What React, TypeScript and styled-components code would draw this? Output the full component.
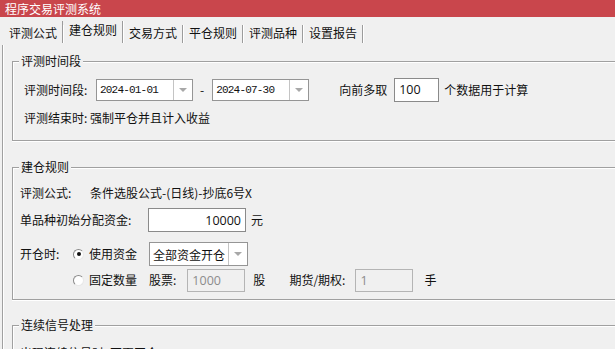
import React from 'react';
import styled, { createGlobalStyle } from 'styled-components';

const Global = createGlobalStyle`
  html, body { margin: 0; padding: 0; background: #f0f0f0; }
  body {
    font-family: "Noto Sans CJK SC", "Microsoft YaHei", sans-serif;
    font-size: 12px;
    color: #111;
  }
  * { box-sizing: border-box; }
`;

const Window = styled.div`
  width: 615px;
  height: 349px;
  overflow: hidden;
  background: #f0f0f0;
  display: flex;
  flex-direction: column;
`;

const TitleBar = styled.div`
  flex: none;
  height: 17px;
  background: #c9464c;
  color: #fff;
  padding-left: 5px;
  font-size: 12px;
  line-height: 17px;
`;

const TabStrip = styled.div`
  flex: none;
  height: 28px;
  display: flex;
  align-items: flex-end;
  padding: 0 0 2px 3px;
`;

const Tab = styled.div<{ $active?: boolean }>`
  height: ${(p) => (p.$active ? 22 : 18)}px;
  line-height: ${(p) => (p.$active ? 18 : 16)}px;
  padding: 0 5px 0 6px;
  border-right: 1px solid #9c9c9c;
  box-shadow: 1px 0 0 #fff;
  margin-left: ${(p) => (p.$active ? -1 : 0)}px;
  border-left: ${(p) => (p.$active ? '1px solid #9c9c9c' : 'none')};
  white-space: nowrap;
  font-size: 12px;
`;

const Panel = styled.div`
  flex: 1;
  margin-left: 2px;
  border-left: 1px solid #a0a0a0;
  box-shadow: inset 1px 0 0 #fff;
  padding: 9px 0 0 9px;
`;

const Group = styled.section<{ $top?: number }>`
  margin-top: ${(p) => p.$top ?? 0}px;
  margin-right: -10px;
`;

const GroupHead = styled.div`
  display: flex;
  align-items: stretch;
  height: 14px;
  line-height: 14px;

  &::before {
    content: "";
    flex: none;
    width: 6px;
    margin-top: 7px;
    border-top: 1px solid #a0a0a0;
    border-left: 1px solid #a0a0a0;
    box-shadow: inset 1px 1px 0 #fff;
  }
  &::after {
    content: "";
    flex: 1;
    margin-top: 7px;
    border-top: 1px solid #a0a0a0;
    box-shadow: inset 0 1px 0 #fff;
  }
`;

const GroupTitle = styled.span`
  padding: 0 2px;
  white-space: nowrap;
`;

const GroupBody = styled.div<{ $pl: number; $pt: number; $pb: number; $gap: number }>`
  border-left: 1px solid #a0a0a0;
  border-bottom: 1px solid #a0a0a0;
  box-shadow: inset 1px 0 0 #fff, 0 1px 0 #fff;
  padding: ${(p) => `${p.$pt}px 0 ${p.$pb}px ${p.$pl}px`};
  display: flex;
  flex-direction: column;
  gap: ${(p) => p.$gap}px;
`;

const Row = styled.div<{ $h: number; $gap?: number }>`
  display: flex;
  align-items: center;
  height: ${(p) => p.$h}px;
  margin-top: ${(p) => p.$gap ?? 0}px;
  white-space: nowrap;
`;

const Label = styled.span<{ $w?: number; $ml?: number; $dim?: boolean }>`
  flex: none;
  width: ${(p) => (p.$w ? `${p.$w}px` : 'auto')};
  margin-left: ${(p) => p.$ml ?? 0}px;
  line-height: 16px;
  color: ${(p) => (p.$dim ? '#111' : '#111')};
`;

const Spacer = styled.span<{ $w: number }>`
  flex: none;
  width: ${(p) => p.$w}px;
`;

const Combo = styled.div<{ $w: number; $h: number; $ml?: number }>`
  flex: none;
  display: flex;
  width: ${(p) => p.$w}px;
  height: ${(p) => p.$h}px;
  margin-left: ${(p) => p.$ml ?? 0}px;
  background: #fff;
  border: 1px solid #959595;
`;

const ComboText = styled.span<{ $mono?: boolean }>`
  flex: 1;
  padding-left: 3px;
  display: flex;
  align-items: center;
  font-family: ${(p) =>
    p.$mono ? '"Liberation Mono", "DejaVu Sans Mono", monospace' : 'inherit'};
  font-size: ${(p) => (p.$mono ? 11 : 12)}px;
  letter-spacing: ${(p) => (p.$mono ? -0.8 : 0)}px;
  overflow: hidden;
`;

const ComboButton = styled.span`
  flex: none;
  width: 19px;
  border-left: 1px solid #c4c4c4;
  display: flex;
  align-items: center;
  justify-content: center;
`;

const Arrow = styled.span`
  width: 0;
  height: 0;
  border-left: 4px solid transparent;
  border-right: 4px solid transparent;
  border-top: 4px solid #a8a8a8;
`;

const Input = styled.div<{ $w: number; $h: number; $ml?: number; $right?: boolean; $disabled?: boolean }>`
  flex: none;
  width: ${(p) => p.$w}px;
  height: ${(p) => p.$h}px;
  margin-left: ${(p) => p.$ml ?? 0}px;
  border: 1px solid ${(p) => (p.$disabled ? '#b4b4b4' : '#8a8a8a')};
  background: ${(p) => (p.$disabled ? '#f0f0f0' : '#fff')};
  color: ${(p) => (p.$disabled ? '#8c8c8c' : '#111')};
  display: flex;
  align-items: center;
  justify-content: ${(p) => (p.$right ? 'flex-end' : 'flex-start')};
  padding: 0 4px;
  font-family: "Open Sans", "Noto Sans", sans-serif;
  font-size: 12.5px;
`;

const Radio = styled.span<{ $checked?: boolean; $ml?: number }>`
  flex: none;
  width: 11px;
  height: 11px;
  margin-left: ${(p) => p.$ml ?? 0}px;
  margin-right: 5px;
  border-radius: 50%;
  border: 1px solid;
  border-color: #8a8a8a #e8e8e8 #e8e8e8 #8a8a8a;
  background: #fff;
  display: flex;
  align-items: center;
  justify-content: center;

  &::after {
    content: "";
    width: 4px;
    height: 4px;
    border-radius: 50%;
    background: ${(p) => (p.$checked ? '#111' : 'transparent')};
  }
`;

const tabs = ['评测公式', '建仓规则', '交易方式', '平仓规则', '评测品种', '设置报告'];

export default function App() {
  return (
    <>
      <Global />
      <Window>
        <TitleBar>程序交易评测系统</TitleBar>
        <TabStrip>
          {tabs.map((t, i) => (
            <Tab key={t} $active={i === 1}>
              {t}
            </Tab>
          ))}
        </TabStrip>
        <Panel>
          <Group>
            <GroupHead>
              <GroupTitle>评测时间段</GroupTitle>
            </GroupHead>
            <GroupBody $pl={11} $pt={10} $pb={12} $gap={7}>
              <Row $h={23}>
                <Label $w={72}>评测时间段:</Label>
                <Combo $w={97} $h={22}>
                  <ComboText $mono>2024-01-01</ComboText>
                  <ComboButton>
                    <Arrow />
                  </ComboButton>
                </Combo>
                <Label $ml={7}>-</Label>
                <Combo $w={97} $h={22} $ml={8}>
                  <ComboText $mono>2024-07-30</ComboText>
                  <ComboButton>
                    <Arrow />
                  </ComboButton>
                </Combo>
                <Label $ml={30}>向前多取</Label>
                <Input $w={45} $h={24} $ml={7}>100</Input>
                <Label $ml={5}>个数据用于计算</Label>
              </Row>
              <Row $h={20}>
                <Label>评测结束时: 强制平仓并且计入收益</Label>
              </Row>
            </GroupBody>
          </Group>

          <Group $top={19}>
            <GroupHead>
              <GroupTitle>建仓规则</GroupTitle>
            </GroupHead>
            <GroupBody $pl={7} $pt={9} $pb={7} $gap={0}>
              <Row $h={20}>
                <Label $w={70}>评测公式:</Label>
                <Label>条件选股公式-(日线)-抄底6号X</Label>
              </Row>
              <Row $h={24} $gap={5}>
                <Label $w={128}>单品种初始分配资金:</Label>
                <Input $w={98} $h={24} $right>
                  10000
                </Input>
                <Label $ml={5}>元</Label>
              </Row>
              <Row $h={24} $gap={10}>
                <Label $w={53}>开仓时:</Label>
                <Radio $checked />
                <Label>使用资金</Label>
                <Combo $w={99} $h={24} $ml={12}>
                  <ComboText>全部资金开仓</ComboText>
                  <ComboButton>
                    <Arrow />
                  </ComboButton>
                </Combo>
              </Row>
              <Row $h={24} $gap={2}>
                <Spacer $w={53} />
                <Radio />
                <Label>固定数量</Label>
                <Label $ml={12}>股票:</Label>
                <Input $w={58} $h={23} $ml={11} $disabled>
                  1000
                </Input>
                <Label $ml={8}>股</Label>
                <Label $ml={24}>期货/期权:</Label>
                <Input $w={58} $h={23} $ml={10} $disabled>
                  1
                </Input>
                <Label $ml={11}>手</Label>
              </Row>
            </GroupBody>
          </Group>

          <Group $top={18}>
            <GroupHead>
              <GroupTitle>连续信号处理</GroupTitle>
            </GroupHead>
            <GroupBody $pl={7} $pt={11} $pb={10} $gap={0}>
              <Row $h={20}>
                <Label>出现连续信号时: 不再开仓</Label>
              </Row>
            </GroupBody>
          </Group>
        </Panel>
      </Window>
    </>
  );
}
